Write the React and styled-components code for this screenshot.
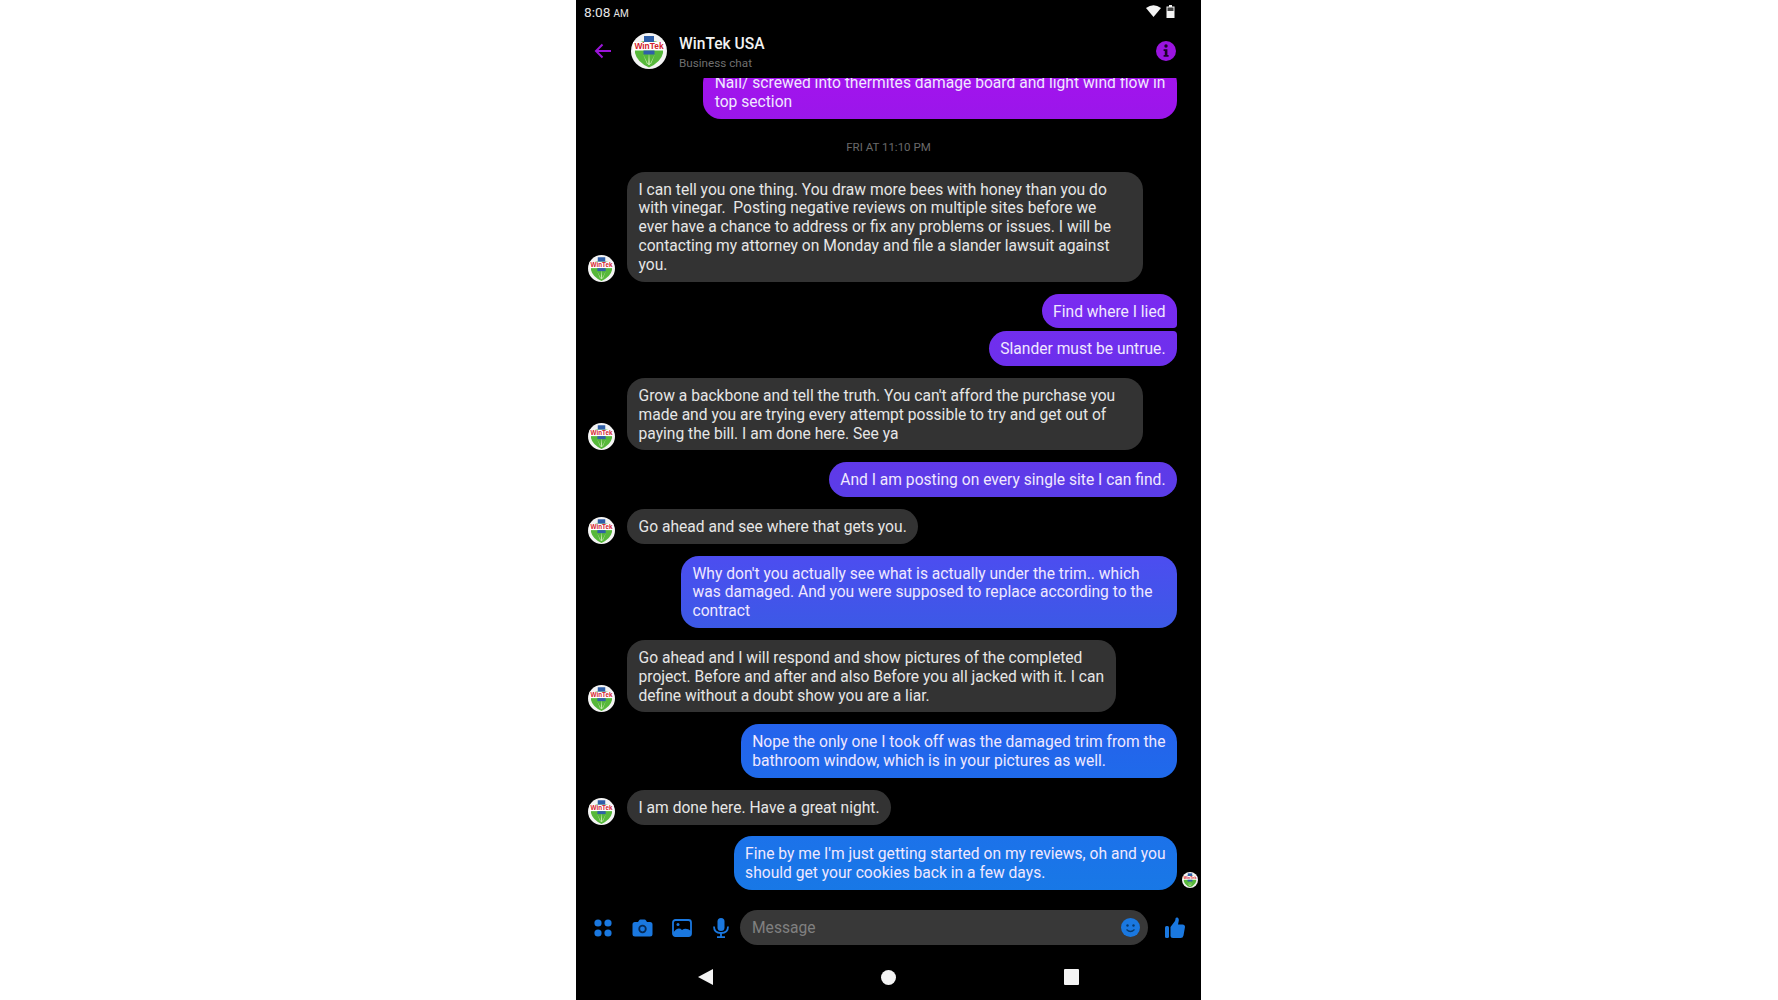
import React from "react";
import styled, { createGlobalStyle } from "styled-components";

const Global = createGlobalStyle`
  html, body { margin: 0; padding: 0; background: #fff; height: 100%; }
  #root { height: 100%; }
  * { box-sizing: border-box; }
`;

const Page = styled.div`
  width: 100%;
  height: 1000px;
  display: flex;
  justify-content: flex-start;
  padding-left: 576px;
  background: #fff;
  overflow: hidden;
  font-family: Roboto, "Liberation Sans", sans-serif;
`;

const Phone = styled.div`
  width: 625px;
  height: 1000px;
  background: #000;
  display: flex;
  flex-direction: column;
  color: #f0f0f0;
`;

const StatusBar = styled.div`
  height: 25px;
  flex: none;
  padding: 0 26px 2px 8px;
  display: flex;
  align-items: center;
  justify-content: space-between;
`;

const Clock = styled.div`
  font-size: 13.7px;
  color: #e6e6e6;
  small { font-size: 10px; margin-left: 3px; }
`;

const StatusIcons = styled.div`
  display: flex;
  align-items: center;
  gap: 5px;
  margin-bottom: 1px;
`;

const Header = styled.div`
  height: 53px;
  flex: none;
  display: flex;
  align-items: center;
  padding: 0 25px 2px 18px;
`;

const BackIcon = styled.svg`
  width: 18px;
  height: 16px;
  flex: none;
  margin-right: 19px;
`;

const HeaderText = styled.div`
  flex: 1;
  margin-left: 12px;
  padding-top: 2px;
  display: flex;
  flex-direction: column;
  gap: 2px;
`;

const Title = styled.div`
  font-size: 15.6px;
  font-weight: 500;
  line-height: 20px;
  color: #f2f2f2;
`;

const Subtitle = styled.div`
  font-size: 11.7px;
  line-height: 14px;
  color: #6f6f6f;
`;

const Messages = styled.div`
  flex: 1;
  min-height: 0;
  overflow: hidden;
  display: flex;
  flex-direction: column;
  justify-content: flex-end;
  padding: 0 24px 20px 12px;
`;

const Stamp = styled.div`
  flex: none;
  margin: 21px 0 6px;
  text-align: center;
  font-size: 11.5px;
  line-height: 14px;
  color: #6a6a6a;
  padding-left: 12px;
`;

const Row = styled.div`
  flex: none;
  display: flex;
  align-items: flex-end;
  justify-content: ${(p) => (p.$mine ? "flex-end" : "flex-start")};
  margin-top: ${(p) => (p.$grouped ? "3px" : "11.9px")};
  gap: 12px;
  position: relative;
`;

const Bubble = styled.div`
  padding: 9px 11.5px 7px;
  font-size: 15.62px;
  line-height: 18.8px;
  color: ${(p) => (p.$mine ? "#f0e8ff" : "#e6e6e6")};
  background: ${(p) => (p.$mine ? `linear-gradient(${p.$from}, ${p.$to})` : "#333333")};
  border-radius: 18px;
  border-top-right-radius: ${(p) => (p.$tail === "bottom" ? "4px" : "18px")};
  border-bottom-right-radius: ${(p) => (p.$tail === "top" ? "4px" : "18px")};
  width: ${(p) => (p.$width ? `${p.$width}px` : "auto")};
`;

const Line = styled.span`
  display: block;
  white-space: pre;
`;

const Seen = styled.div`
  position: absolute;
  right: -21px;
  bottom: 2px;
  line-height: 0;
`;

const Composer = styled.div`
  height: 35px;
  flex: none;
  display: flex;
  align-items: center;
  padding: 0 14px 0 18px;
`;

const ToolSlot = styled.div`
  width: ${(p) => p.$w}px;
  flex: none;
  display: flex;
  align-items: center;
  line-height: 0;
`;

const Field = styled.div`
  width: 408px;
  height: 35px;
  flex: none;
  margin-right: 17px;
  border-radius: 17.5px;
  background: #383838;
  display: flex;
  align-items: center;
  justify-content: space-between;
  padding: 0 8px 0 12px;
`;

const Placeholder = styled.div`
  font-size: 15.6px;
  color: #808080;
`;

const NavBar = styled.div`
  height: 55px;
  flex: none;
  display: flex;
  align-items: center;
  padding: 12px 122px 3px 122px;
  justify-content: space-between;
`;

const NavTriangle = styled.svg`
  width: 15px;
  height: 16px;
`;

const NavCircle = styled.div`
  width: 15px;
  height: 15px;
  border-radius: 50%;
  background: #f4f4f4;
`;

const NavSquare = styled.div`
  width: 15px;
  height: 16px;
  border-radius: 1px;
  background: #f4f4f4;
`;

const Logo = ({ size }) => (
  <svg width={size} height={size} viewBox="0 0 36 36">
    <circle cx="18" cy="18" r="18" fill="#f4f4f4" />
    <path d="M4 11 Q18 4 32 11 L32 20 Q30 29 18 34.5 Q6 29 4 20 Z" fill="#56b83a" />
    <path d="M13 3 h10 v6 h-10 z" fill="#2f5fa8" />
    <path d="M18 19 L19 32 L17 32 Z M12 21 L17 31 L16 31 Z M24 21 L19 31 L20 31 Z" fill="#bfe6a6" />
    <rect x="2" y="9" width="32" height="8.5" fill="#fff" />
    <text x="18" y="16" textAnchor="middle" fontFamily="Liberation Sans, sans-serif" fontSize="8.4" fontWeight="700" fill="#d4202a">WinTek</text>
    <rect x="12.5" y="17.5" width="11" height="4" fill="#2f5fa8" />
  </svg>
);

const Blue = "#1a78e0";

const Apps = () => (
  <svg width="18" height="18" viewBox="0 0 18 18" fill={Blue}>
    <circle cx="4" cy="4" r="3.6" />
    <circle cx="14" cy="4" r="3.6" />
    <circle cx="4" cy="14" r="3.6" />
    <circle cx="14" cy="14" r="3.6" />
  </svg>
);

const Camera = () => (
  <svg width="21" height="18" viewBox="0 0 21 18">
    <path fill={Blue} d="M7 1.5 Q7.5 0.5 8.5 0.5 H12.5 Q13.5 0.5 14 1.5 L15 3 H18 Q20.5 3 20.5 5.5 V15 Q20.5 17.5 18 17.5 H3 Q0.5 17.5 0.5 15 V5.5 Q0.5 3 3 3 H6 Z" />
    <circle cx="10.5" cy="10" r="4.2" fill="#062a55" />
    <circle cx="10.5" cy="10" r="2.4" fill={Blue} />
  </svg>
);

const Picture = () => (
  <svg width="20" height="18" viewBox="0 0 20 18">
    <rect x="1" y="1" width="18" height="16" rx="2.5" fill="none" stroke={Blue} strokeWidth="1.8" />
    <circle cx="6" cy="5.5" r="1.5" fill={Blue} />
    <path fill={Blue} d="M1 14 Q6 7 10 11 Q14 8 19 12 V15 Q19 17 17 17 H3 Q1 17 1 15 Z" />
  </svg>
);

const Mic = () => (
  <svg width="16" height="20" viewBox="0 0 16 20" fill="none">
    <rect x="4.5" y="0" width="7" height="13" rx="3.5" fill={Blue} />
    <path d="M1 8.5 Q1 15 8 15 Q15 15 15 8.5" stroke={Blue} strokeWidth="1.8" />
    <path d="M8 15 V19 M4 19.2 H12" stroke={Blue} strokeWidth="1.8" />
  </svg>
);

const Smile = () => (
  <svg width="19" height="19" viewBox="0 0 19 19">
    <circle cx="9.5" cy="9.5" r="9.5" fill={Blue} />
    <circle cx="6.5" cy="7.5" r="1.2" fill="#073a6e" />
    <circle cx="12.5" cy="7.5" r="1.2" fill="#073a6e" />
    <path d="M5.5 11.5 Q9.5 15.5 13.5 11.5" stroke="#073a6e" strokeWidth="1.2" fill="none" />
  </svg>
);

const Thumb = () => (
  <svg width="20" height="21" viewBox="0 0 20 21" fill={Blue}>
    <rect x="0" y="9" width="4" height="12" rx="1.5" />
    <path d="M5.5 10 L10 4 Q10.5 2.5 10.5 1.5 Q11 0 12.5 0.5 Q14.5 1.5 13.5 5 L13 7.5 H17.5 Q20 7.5 20 10 L18.5 18.5 Q18 21 15.5 21 H8 Q5.5 21 5.5 19 Z" />
  </svg>
);

const Wifi = () => (
  <svg width="15" height="12" viewBox="0 0 15 12">
    <path fill="#f4f4f4" d="M0 3 Q7.5 -2.5 15 3 L7.5 12 Z" />
  </svg>
);

const Battery = () => (
  <svg width="9" height="13" viewBox="0 0 9 13">
    <path fill="#f4f4f4" d="M3 0 H6 V1.5 H8.5 V13 H0.5 V1.5 H3 Z" />
    <rect x="1.5" y="2.5" width="6" height="3.5" fill="#444" />
  </svg>
);

const Info = () => (
  <svg width="20" height="20" viewBox="0 0 20 20">
    <circle cx="10" cy="10" r="10" fill="#9a14e0" />
    <circle cx="10" cy="5" r="1.7" fill="#1a0326" />
    <path d="M7.6 8.2 H11.4 V14 H12.6 V15.8 H7.6 V14 H8.8 V10 H7.6 Z" fill="#1a0326" />
  </svg>
);

const messages = [
  { id: 1, mine: true, from: "#a513ee", to: "#9a16ea", lines: ["Nail/ screwed into thermites damage board and light wind flow in", "top section"] },
  { id: "stamp", stamp: "FRI AT 11:10 PM" },
  { id: 2, width: 516, lines: ["I can tell you one thing. You draw more bees with honey than you do", "with vinegar.  Posting negative reviews on multiple sites before we", "ever have a chance to address or fix any problems or issues. I will be", "contacting my attorney on Monday and file a slander lawsuit against", "you."] },
  { id: 3, mine: true, from: "#7a2af0", to: "#742cef", tail: "top", lines: ["Find where I lied"] },
  { id: 4, mine: true, grouped: true, from: "#722eee", to: "#6c30ec", tail: "bottom", lines: ["Slander must be untrue."] },
  { id: 5, width: 516, lines: ["Grow a backbone and tell the truth. You can't afford the purchase you", "made and you are trying every attempt possible to try and get out of", "paying the bill. I am done here. See ya"] },
  { id: 6, mine: true, from: "#6039e8", to: "#5a3de8", lines: ["And I am posting on every single site I can find."] },
  { id: 7, lines: ["Go ahead and see where that gets you."] },
  { id: 8, mine: true, width: 496, from: "#4c4df0", to: "#3c59e6", lines: ["Why don't you actually see what is actually under the trim.. which", "was damaged. And you were supposed to replace according to the", "contract"] },
  { id: 9, lines: ["Go ahead and I will respond and show pictures of the completed", "project. Before and after and also Before you all jacked with it. I can", "define without a doubt show you are a liar."] },
  { id: 10, mine: true, from: "#2562ec", to: "#1f6aea", lines: ["Nope the only one I took off was the damaged trim from the", "bathroom window, which is in your pictures as well."] },
  { id: 11, lines: ["I am done here. Have a great night."] },
  { id: 12, mine: true, seen: true, from: "#1c72ea", to: "#1878e6", lines: ["Fine by me I'm just getting started on my reviews, oh and you", "should get your cookies back in a few days."] },
];

export default function App() {
  return (
    <Page>
      <Global />
      <Phone>
        <StatusBar>
          <Clock>8:08<small>AM</small></Clock>
          <StatusIcons>
            <Wifi />
            <Battery />
          </StatusIcons>
        </StatusBar>
        <Header>
          <BackIcon viewBox="0 0 18 16" fill="none">
            <path d="M17 8 H2 M8.5 1.5 L2 8 L8.5 14.5" stroke="#9a14d8" strokeWidth="2" />
          </BackIcon>
          <Logo size={36} />
          <HeaderText>
            <Title>WinTek USA</Title>
            <Subtitle>Business chat</Subtitle>
          </HeaderText>
          <Info />
        </Header>
        <Messages>
          {messages.map((m) =>
            m.stamp ? (
              <Stamp key={m.id}>{m.stamp}</Stamp>
            ) : (
              <Row key={m.id} $mine={m.mine} $grouped={m.grouped}>
                {!m.mine && <Logo size={27} />}
                <Bubble $mine={m.mine} $from={m.from} $to={m.to} $tail={m.tail} $width={m.width}>
                  {m.lines.map((l, i) => (
                    <Line key={i}>{l}</Line>
                  ))}
                </Bubble>
                {m.seen && (
                  <Seen>
                    <Logo size={16} />
                  </Seen>
                )}
              </Row>
            )
          )}
        </Messages>
        <Composer>
          <ToolSlot $w={38}><Apps /></ToolSlot>
          <ToolSlot $w={40}><Camera /></ToolSlot>
          <ToolSlot $w={41}><Picture /></ToolSlot>
          <ToolSlot $w={27}><Mic /></ToolSlot>
          <Field>
            <Placeholder>Message</Placeholder>
            <Smile />
          </Field>
          <ToolSlot $w={20}><Thumb /></ToolSlot>
        </Composer>
        <NavBar>
          <NavTriangle viewBox="0 0 15 16">
            <path d="M15 0 V16 L0 8 Z" fill="#f4f4f4" />
          </NavTriangle>
          <NavCircle />
          <NavSquare />
        </NavBar>
      </Phone>
    </Page>
  );
}
